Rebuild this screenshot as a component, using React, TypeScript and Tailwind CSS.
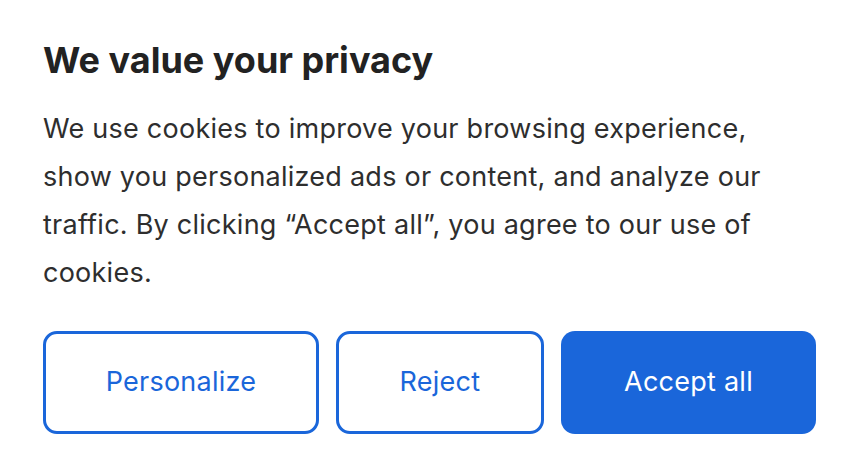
import React from 'react';

const CookieBanner = () => {
  return (
    <div className="w-[861px] h-[467px] bg-white px-[43px] pt-[38px]" style={{ fontFamily: 'Inter, "Noto Sans", sans-serif' }}>
      {/* Title */}
      <h1 className="text-[36px] leading-[44px] font-bold text-[#222222]">We value your privacy</h1>

      {/* Body */}
      <p className="mt-[23px] text-[27px] leading-[48px] tracking-[0.25px] text-[#2e2e2e] w-[776px]">
        We use cookies to improve your browsing experience, show you personalized ads or content, and analyze our
        traffic. By clicking “Accept all”, you agree to our use of cookies.
      </p>

      {/* Actions */}
      <div className="mt-[34px] flex gap-[17px]">
        <button className="w-[276px] h-[103px] rounded-[14px] border-[3px] border-[#1a66da] text-[#1a66da] text-[27px] tracking-[0.25px]">
          Personalize
        </button>
        <button className="w-[208px] h-[103px] rounded-[14px] border-[3px] border-[#1a66da] text-[#1a66da] text-[27px] tracking-[0.25px]">
          Reject
        </button>
        <button className="w-[255px] h-[103px] rounded-[14px] bg-[#1a66da] text-white text-[27px] tracking-[0.25px]">
          Accept all
        </button>
      </div>
    </div>
  );
};

export default function App() {
  return <CookieBanner />;
}
